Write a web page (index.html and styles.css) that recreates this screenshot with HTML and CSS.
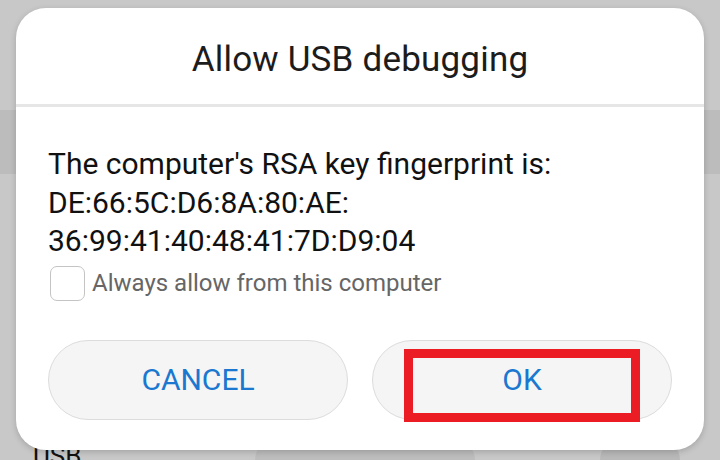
FILE: index.html
```html
<!DOCTYPE html>
<html lang="en">
<head>
    <meta charset="UTF-8">
    <title>Allow USB debugging</title>
    <link rel="stylesheet" href="styles.css">
</head>
<body>
    <div class="screen">
        <div class="backdrop">
            <div class="band"></div>
            <div class="usb_label">USB</div>
            <div class="pill_shadow"></div>
            <div class="toggle_shadow"></div>
        </div>
        <div class="dialog">
            <div class="dialog_title">Allow USB debugging</div>
            <div class="divider"></div>
            <div class="dialog_body">
                <p class="message">The computer's RSA key fingerprint is:<br>DE:66:5C:D6:8A:80:AE:<br>36:99:41:40:48:41:7D:D9:04</p>
                <label class="always">
                    <span class="check_box"></span>
                    <span>Always allow from this computer</span>
                </label>
            </div>
            <div class="actions">
                <button class="action_btn">CANCEL</button>
                <button class="action_btn marked">
                    <span class="mark"></span>
                    OK
                </button>
            </div>
        </div>
    </div>
</body>
</html>
```

FILE: styles.css
```css
body {
    margin: 0;
    background: #c8c8c8;
    font-family: Roboto, "Noto Sans", Arial, sans-serif;
}

.screen {
    position: relative;
    width: 720px;
    height: 460px;
    overflow: hidden;
    padding: 8px 16px 0;
    box-sizing: border-box;
}

.backdrop {
    position: absolute;
    inset: 0;
    z-index: 0;
}

.band {
    position: absolute;
    top: 110px;
    left: 0;
    right: 0;
    height: 64px;
    background: #bcbcbc;
}

.usb_label {
    position: absolute;
    left: 33px;
    top: 441px;
    font-size: 26px;
    line-height: 30px;
    color: #111;
}

.pill_shadow {
    position: absolute;
    left: 255px;
    top: 440px;
    width: 220px;
    height: 40px;
    border-radius: 20px;
    background: #bdbdbd;
}

.toggle_shadow {
    position: absolute;
    left: 600px;
    top: 440px;
    width: 80px;
    height: 40px;
    border-radius: 20px;
    background: #b9b9b9;
}

.dialog {
    position: relative;
    z-index: 1;
    background: #fff;
    border-radius: 30px;
    height: 442px;
    box-shadow: 0 2px 6px rgba(0, 0, 0, 0.18);
}

.dialog_title {
    height: 96px;
    box-sizing: border-box;
    padding-top: 6px;
    display: flex;
    align-items: center;
    justify-content: center;
    font-size: 35px;
    letter-spacing: 0.2px;
    color: #1c1c1c;
}

.divider {
    height: 3px;
    background: #e6e6e6;
}

.dialog_body {
    padding: 38px 32px 0;
}

.message {
    margin: 0;
    font-size: 30px;
    line-height: 38.5px;
    color: #111;
}

.always {
    display: flex;
    align-items: center;
    gap: 7px;
    margin-top: 5px;
    margin-left: 2px;
    font-size: 24px;
    color: #666;
}

.check_box {
    width: 35px;
    height: 35px;
    border: 1.5px solid #c4c4c4;
    border-radius: 7px;
    box-sizing: border-box;
}

.actions {
    display: flex;
    gap: 24px;
    padding: 39px 32px 0;
}

.action_btn {
    position: relative;
    flex: 1;
    height: 80px;
    border: 1px solid #dcdcdc;
    border-radius: 40px;
    background: #f5f5f5;
    color: #1b78d0;
    font-family: inherit;
    font-size: 30px;
}

.mark {
    position: absolute;
    left: 31px;
    top: 8px;
    width: 236px;
    height: 73px;
    border: 9px solid #ec1c24;
    box-sizing: border-box;
}
```
